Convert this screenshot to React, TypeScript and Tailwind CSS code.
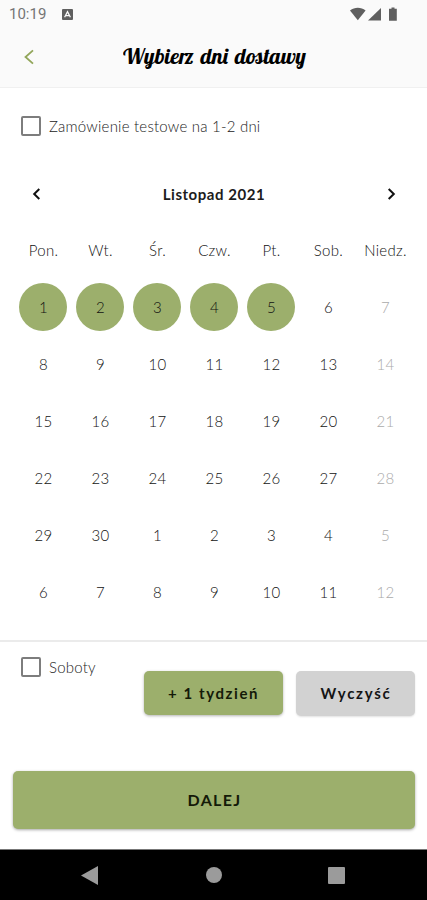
import React, { useState } from 'react';

const WEEKDAYS = ['Pon.', 'Wt.', 'Śr.', 'Czw.', 'Pt.', 'Sob.', 'Niedz.'];

// November 2021 starts on a Monday; the tail belongs to December.
const NOVEMBER_DAYS = 30;
const CELLS = Array.from({ length: 42 }, (_, i) => ({
  index: i,
  label: i < NOVEMBER_DAYS ? i + 1 : i - NOVEMBER_DAYS + 1,
  isSunday: i % 7 === 6,
}));

function StatusBar() {
  return (
    <div className="flex h-7 items-center pl-[9px] pr-[28px]">
      <span className="w-[38px] whitespace-nowrap font-['Roboto',sans-serif] text-[15px] leading-none text-[#757575]">
        10:19
      </span>
      <svg className="ml-[15px]" width="11" height="11" viewBox="0 0 11 11">
        <rect width="11" height="11" rx="1" fill="#5f5f5f" />
        <path d="M2.6 8.3 5.5 2.6l2.9 5.7M3.8 6.6h3.4" fill="none" stroke="#fafafa" strokeWidth="1.3" />
      </svg>
      <svg className="ml-auto" width="49" height="15" viewBox="0 0 49 15" fill="#5f5f5f">
        <path d="M0 3.6C4.6-.1 11-.1 15.6 3.6L7.8 13.3Z" />
        <path d="M31 1v12.4H18Z" />
        <path d="M41.5.4h3v1.3h2.3v12h-7.8v-12h2.5Z" />
      </svg>
    </div>
  );
}

function Header() {
  return (
    <header className="h-[88px] shrink-0 border-b border-[#f0f0f0] bg-[#fafafa]">
      <StatusBar />
      <div className="flex h-[58px] items-center pl-[23px]">
        <button aria-label="Wstecz">
          <svg width="12" height="16" viewBox="0 0 12 16" fill="none" stroke="#92a65a" strokeWidth="1.8">
            <path d="M10 1.3 2.5 8l7.5 6.7" />
          </svg>
        </button>
        <h1 className="ml-[88px]">
          <svg width="186" height="34" viewBox="0 0 186 34">
            <text
              x="0"
              y="24"
              textLength="183"
              lengthAdjust="spacingAndGlyphs"
              className="fill-black font-['Lobster',cursive] text-[21.5px] [word-spacing:2px]"
            >
              Wybierz dni dostawy
            </text>
          </svg>
        </h1>
      </div>
    </header>
  );
}

interface CheckboxProps {
  label: string;
}

function Checkbox({ label }: CheckboxProps) {
  const [checked, setChecked] = useState(false);
  return (
    <label className="flex h-5 items-center gap-2">
      <input
        type="checkbox"
        checked={checked}
        onChange={(e) => setChecked(e.target.checked)}
        className="h-5 w-5 appearance-none rounded-[2px] border-2 border-[#7d7d7d] checked:bg-[#9caf6c]"
      />
      <span className="whitespace-nowrap text-[15px] font-light tracking-[0.22px] text-[#222]">{label}</span>
    </label>
  );
}

function Calendar() {
  const [selected, setSelected] = useState<number[]>([0, 1, 2, 3, 4]);

  function toggle(index: number) {
    setSelected((prev) => (prev.includes(index) ? prev.filter((d) => d !== index) : [...prev, index]));
  }

  return (
    <section>
      <div className="flex h-6 items-center justify-between pl-[32px] pr-[31px]">
        <button aria-label="Poprzedni miesiąc">
          <svg width="9" height="12" viewBox="0 0 9 12" fill="none" stroke="#111" strokeWidth="2">
            <path d="M7.3 1 2.2 6l5.1 5" />
          </svg>
        </button>
        <h2 className="text-[15px] font-bold tracking-[0.55px] text-[#1c1c1c]">Listopad 2021</h2>
        <button aria-label="Następny miesiąc">
          <svg width="9" height="12" viewBox="0 0 9 12" fill="none" stroke="#111" strokeWidth="2">
            <path d="m1.7 1 5.1 5-5.1 5" />
          </svg>
        </button>
      </div>

      <div className="mt-[32px] grid grid-cols-[repeat(7,57px)] pl-[14.5px] text-center">
        {WEEKDAYS.map((day) => (
          <span key={day} className="h-10 pl-px text-[15px] font-light leading-6 tracking-[0.3px] text-[#111]">
            {day}
          </span>
        ))}
        {CELLS.map((cell) => (
          <div key={cell.index} className="flex h-[57px] items-center justify-center">
            <button
              disabled={cell.isSunday}
              onClick={() => toggle(cell.index)}
              className={`flex h-12 w-12 items-center justify-center rounded-full pt-px pl-px text-[15px] font-light tracking-[0.2px] ${
                selected.includes(cell.index) ? 'bg-[#9caf6c]' : ''
              } ${cell.isSunday ? 'text-[#aaa]' : 'text-[#111]'}`}
            >
              {cell.label}
            </button>
          </div>
        ))}
      </div>
    </section>
  );
}

function NavigationBar() {
  return (
    <nav className="flex h-[51px] shrink-0 items-center justify-between border-t border-[#777] bg-black pl-[81px] pr-[82px]">
      <svg width="17" height="19" viewBox="0 0 17 19" fill="#9b9b9b">
        <path d="M17 0v19L0 9.5Z" />
      </svg>
      <span className="ml-px h-4 w-4 rounded-full bg-[#9b9b9b]" />
      <span className="h-[17px] w-[17px] rounded-[1px] bg-[#9b9b9b]" />
    </nav>
  );
}

export default function App() {
  return (
    <div className="flex h-[900px] w-[427px] flex-col overflow-hidden bg-white font-['Lato',sans-serif]">
      <Header />

      <main className="h-[554px] shrink-0 border-b-2 border-[#ebebeb]">
        <div className="pl-[21px] pt-[28px]">
          <Checkbox label="Zamówienie testowe na 1-2 dni" />
        </div>
        <div className="mt-[46px]">
          <Calendar />
        </div>
      </main>

      <footer className="flex flex-1 flex-col pl-[13px] pr-3">
        <div className="flex justify-between pl-2 pt-[15px]">
          <Checkbox label="Soboty" />
          <div className="mt-[14px] flex gap-[13px]">
            <button className="h-[44px] w-[139px] rounded-[5px] bg-[#9caf6c] text-[15px] font-bold tracking-[1.6px] text-[#141a08] shadow-[0_1px_3px_rgba(0,0,0,0.3)]">
              + 1 tydzień
            </button>
            <button className="h-[45px] w-[119px] rounded-[5px] bg-[#d2d2d2] pl-px text-[15px] font-bold tracking-[1.7px] text-[#151515] shadow-[0_1px_2px_rgba(0,0,0,0.12)]">
              Wyczyść
            </button>
          </div>
        </div>
        <button className="mt-[55px] h-[58px] w-full rounded-[5px] bg-[#9caf6c] pl-px text-[16px] font-bold tracking-[1.3px] text-[#141a08] shadow-[0_1px_3px_rgba(0,0,0,0.35)]">
          DALEJ
        </button>
      </footer>

      <NavigationBar />
    </div>
  );
}
